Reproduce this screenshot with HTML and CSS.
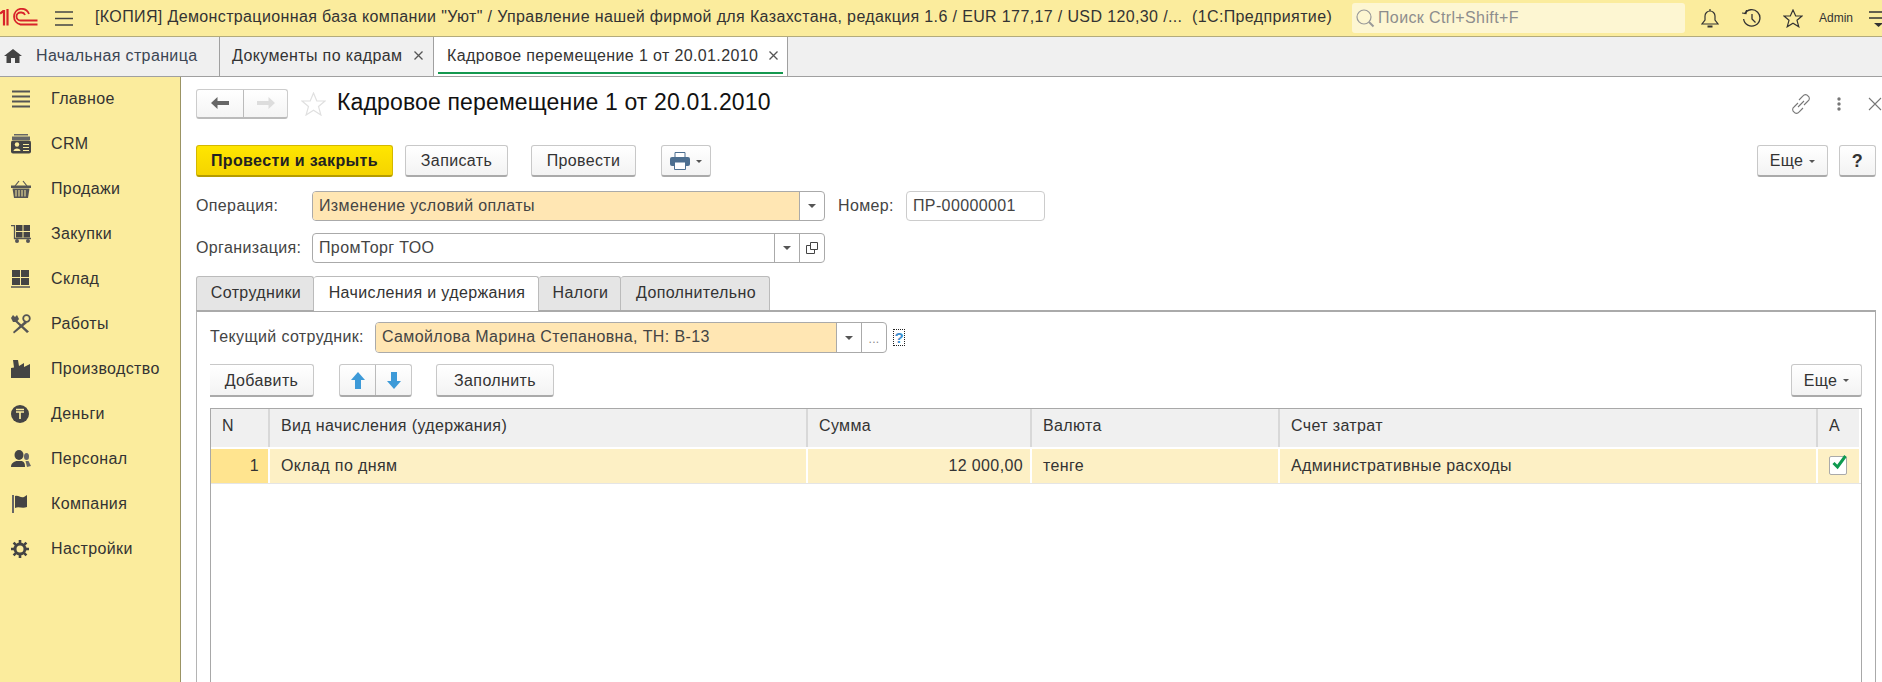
FILE: index.html
```html
<!DOCTYPE html>
<html lang="ru">
<head>
<meta charset="utf-8">
<title>Кадровое перемещение</title>
<link rel="stylesheet" href="styles.css">
</head>
<body>
<header class="topbar">
  <svg class="logo" width="38" height="18" viewBox="0 0 38 18" fill="none" stroke="#d8232a">
    <path d="M0 5.500L3.500 3M4 2v15.500M7.500 1v16.500" stroke-width="2.200"/>
    <path d="M37.500 16.500H20.500A8 8 0 0 1 20.500 .8h1A8 8 0 0 1 29 6" stroke-width="1.800"/>
    <path d="M37.500 12.500H20.500A4 4 0 0 1 20.500 4.500h1A4 4 0 0 1 25 7" stroke-width="1.800"/>
  </svg>
  <svg class="burger" width="18" height="15" viewBox="0 0 18 15"><path d="M0 1h18M0 7.500h18M0 14h18" stroke="#444" stroke-width="1.300"/></svg>
  <div class="apptitle">[КОПИЯ] Демонстрационная база компании "Уют" / Управление нашей фирмой для Казахстана, редакция 1.6 / EUR 177,17 / USD 120,30 /...&nbsp;&nbsp;(1С:Предприятие)</div>
  <div class="search">
    <svg width="19" height="19" viewBox="0 0 19 19" fill="none"><circle cx="8" cy="8" r="7" stroke="#999" stroke-width="1.200"/><path d="M13 13l4.500 4.500" stroke="#999" stroke-width="2"/></svg>
    <span>Поиск Ctrl+Shift+F</span>
  </div>
  <svg class="ticon bell" width="18" height="19" viewBox="0 0 18 19" fill="none" stroke="#333" stroke-width="1.200"><path d="M1 15h16l-3-4V7a5 5 0 0 0-10 0v4z"/><path d="M6.500 17.500h5" stroke-width="2"/><path d="M9 0v2"/></svg>
  <svg class="ticon hist" width="20" height="19" viewBox="0 0 20 19" fill="none" stroke="#333" stroke-width="1.300"><path d="M2.500 5a8.200 8.200 0 1 1-.9 5"/><path d="M0 4l4 .5L4.500 1" stroke-width="1.200"/><path d="M10 5v5l3.500 3.500"/></svg>
  <svg class="ticon fav" width="20" height="19" viewBox="0 0 20 19" fill="none" stroke="#333" stroke-width="1.200"><path d="M10 1l2.700 6h6.300l-5 4.300 1.800 6.500L10 14.300l-5.800 3.500L6 11.300 1 7h6.300z"/></svg>
  <span class="admin">Admin</span>
  <svg class="menu2" width="14" height="19" viewBox="0 0 14 19"><path d="M0 3h20M0 9h20" stroke="#333" stroke-width="1.300"/><path d="M5 14h9l-4.500 4z" fill="#333"/></svg>
</header>

<nav class="tabbar">
  <div class="ptab home">
    <svg width="18" height="14" viewBox="0 0 18 14"><path d="M9 0L0 7h2.500v7h4.500V9h4v5h4.500V7H18z" fill="#444"/></svg>
    <span>Начальная страница</span>
  </div>
  <div class="ptab docs"><span>Документы по кадрам</span><svg class="x" width="9" height="9" viewBox="0 0 9 9"><path d="M.5 .5l8 8M8.500 .5l-8 8" stroke="#555" stroke-width="1.300"/></svg></div>
  <div class="ptab current"><span>Кадровое перемещение 1 от 20.01.2010</span><svg class="x" width="9" height="9" viewBox="0 0 9 9"><path d="M.5 .5l8 8M8.500 .5l-8 8" stroke="#555" stroke-width="1.300"/></svg></div>
</nav>

<div class="main">
  <aside class="side">
    <div class="item"><svg width="20" height="18" viewBox="0 0 20 18"><path d="M1 1.500h18M1 6.500h18M1 11.500h18M1 16.500h18" stroke="#555" stroke-width="2.200"/></svg><span>Главное</span></div>
    <div class="item"><svg width="20" height="20" viewBox="0 0 20 20"><path d="M3 0h14v1.500H3zM1 2.500h18V6H1z" fill="#666"/><rect y="6.500" width="20" height="13" rx="2" fill="#444"/><circle cx="6" cy="10.500" r="2.200" fill="#fbec9d"/><path d="M2.500 17c0-3.500 7-3.500 7 0z" fill="#fbec9d"/><path d="M12 10.500h6M12 13.500h6M12 16.500h6" stroke="#fbec9d"/></svg><span>CRM</span></div>
    <div class="item"><svg width="20" height="18" viewBox="0 0 20 18"><path d="M0 5.500h20V8H0zM1.500 8.500h17L17 18H3z" fill="#555"/><path d="M4 6l4-5M16 6l-4-5" stroke="#555" stroke-width="1.200"/><path d="M5 10v6.500M8 10v6.500M11 10v6.500M14 10v6.500" stroke="#fbec9d"/></svg><span>Продажи</span></div>
    <div class="item"><svg width="20" height="18" viewBox="0 0 20 18"><path d="M0 .5h3.500V13.500H20" fill="none" stroke="#555" stroke-width="1.300"/><path d="M5 0h6.500v6H5zM12.500 0H19v6h-6.500zM5 7h6.500v5.500H5zM12.500 7H19v5.500h-6.500z" fill="#444"/><circle cx="6" cy="16" r="2" fill="#555"/><circle cx="17" cy="16" r="2" fill="#555"/></svg><span>Закупки</span></div>
    <div class="item"><svg width="19" height="18" viewBox="0 0 19 18"><path d="M1 0h8v7H1zM10 0h8v7h-8zM1 8h8v7H1zM10 8h8v7h-8z" fill="#444"/><path d="M0 17h19" stroke="#555" stroke-width="1.500"/></svg><span>Склад</span></div>
    <div class="item"><svg width="20" height="20" viewBox="0 0 20 20"><path d="M0 4l2-3 2 2 2-2 2 4-1.500 2L18 17.500 16 19 4.500 8 2 8z" fill="#555"/><path d="M14 7L2 18l1 1.500L16 9z" fill="#555"/><circle cx="15.500" cy="4.500" r="3.300" fill="none" stroke="#555" stroke-width="1.800"/></svg><span>Работы</span></div>
    <div class="item"><svg width="19" height="18" viewBox="0 0 19 18"><path d="M0 18V8l3-.5L2 0h5l1 6 5-3v4l6-3v14z" fill="#444"/></svg><span>Производство</span></div>
    <div class="item"><svg width="18" height="18" viewBox="0 0 18 18"><circle cx="9" cy="9" r="9" fill="#444"/><path d="M5 4.500h8M5 7h8M9 7v7" stroke="#fbec9d" stroke-width="1.700"/></svg><span>Деньги</span></div>
    <div class="item"><svg width="20" height="18" viewBox="0 0 20 18"><ellipse cx="8" cy="5" rx="4.500" ry="5" fill="#444"/><path d="M0 17c0-4 3-5 5-6h6c2 1 3 2 3 6z" fill="#444"/><ellipse cx="15.500" cy="6.500" rx="2.500" ry="3.500" fill="#666"/><path d="M14.500 11h3l2.500 5-4 1z" fill="#666"/></svg><span>Персонал</span></div>
    <div class="item"><svg width="17" height="18" viewBox="0 0 17 18"><path d="M2 0v18" stroke="#666" stroke-width="2"/><path d="M4 1c4-1 5 2 9 1l3-2v12c-5 2-8-1-12 1z" fill="#444"/></svg><span>Компания</span></div>
    <div class="item"><svg width="18" height="18" viewBox="0 0 18 18"><circle cx="9" cy="9" r="5" fill="none" stroke="#444" stroke-width="3"/><path d="M9 0v4M9 14v4M0 9h4M14 9h4M2.600 2.600l3 3M12.400 12.400l3 3M15.400 2.600l-3 3M5.600 12.400l-3 3" stroke="#444" stroke-width="2.600"/></svg><span>Настройки</span></div>
  </aside>

  <main class="content">
    <div class="titlerow">
      <div class="navgroup">
        <div class="navbtn back"><svg width="18" height="12" viewBox="0 0 18 12"><path d="M6.500 0v4H18v4H6.500v4L0 6z" fill="#666"/></svg></div>
        <div class="navbtn fwd"><svg width="18" height="12" viewBox="0 0 18 12"><path d="M11.500 0v4H0v4h11.500v4L18 6z" fill="#ddd"/></svg></div>
      </div>
      <svg class="star" width="25" height="24" viewBox="0 0 25 24" fill="none" stroke="#e0e0e0" stroke-width="1.200"><path d="M12.500 1l3.300 8h8.200l-6.500 5.500 2.400 8.500-7.400-4.800L5.100 23l2.400-8.500L1 9h8.200z"/></svg>
      <h1>Кадровое перемещение 1 от 20.01.2010</h1>
      <div class="winicons">
        <svg width="20" height="20" viewBox="0 0 20 20" fill="none" stroke="#777" stroke-width="1.100"><path d="M8 6l4-4a3 3 0 0 1 5 0 3 3 0 0 1 0 5l-4 4M12 14l-4 4a3 3 0 0 1-5 0 3 3 0 0 1 0-5l4-4M7 13l6-6"/></svg>
        <svg class="dots" width="4" height="14" viewBox="0 0 4 14"><circle cx="2" cy="2" r="1.700" fill="#777"/><circle cx="2" cy="7" r="1.700" fill="#777"/><circle cx="2" cy="12" r="1.700" fill="#777"/></svg>
        <svg class="close" width="14" height="14" viewBox="0 0 14 14"><path d="M1 1l12 12M13 1L1 13" stroke="#777" stroke-width="1.100"/></svg>
      </div>
    </div>

    <div class="cmdrow">
      <button class="btn primary">Провести и закрыть</button>
      <button class="btn b-save">Записать</button>
      <button class="btn b-post">Провести</button>
      <button class="btn b-print">
        <svg width="20" height="18" viewBox="0 0 20 18"><path d="M5 .5h10v5H5z" fill="#fff" stroke="#4d6f90"/><rect y="5" width="20" height="9" rx="2" fill="#4d6f90"/><path d="M4.500 10h11v7.500h-11z" fill="#fff" stroke="#4d6f90"/></svg>
        <i class="caret"></i>
      </button>
      <div class="spacer"></div>
      <button class="btn b-more">Еще<i class="caret"></i></button>
      <button class="btn b-help">?</button>
    </div>

    <div class="fieldrow r-op">
      <label class="lbl">Операция:</label>
      <div class="field f-main">
        <div class="val hi">Изменение условий оплаты</div>
        <div class="fbtn"><i class="caret dark"></i></div>
      </div>
      <label class="lbl l-num">Номер:</label>
      <div class="field f-num"><div class="val">ПР-00000001</div></div>
    </div>
    <div class="fieldrow r-org">
      <label class="lbl">Организация:</label>
      <div class="field f-main">
        <div class="val">ПромТорг ТОО</div>
        <div class="fbtn"><i class="caret dark"></i></div>
        <div class="fbtn"><svg width="12" height="12" viewBox="0 0 12 12" fill="none" stroke="#444"><path d="M4.500 .5h7v7h-7z"/><path d="M4 3.500H.5v8h8V8"/></svg></div>
      </div>
    </div>

    <div class="tabs">
      <div class="tab t1">Сотрудники</div>
      <div class="tab t2 on">Начисления и удержания</div>
      <div class="tab t3">Налоги</div>
      <div class="tab t4">Дополнительно</div>
    </div>

    <section class="panel">
      <div class="fieldrow r-emp">
        <label class="lbl">Текущий сотрудник:</label>
        <div class="field f-emp">
          <div class="val hi">Самойлова Марина Степановна, ТН: В-13</div>
          <div class="fbtn"><i class="caret dark"></i></div>
          <div class="fbtn dots3">...</div>
        </div>
        <span class="qmark">?</span>
      </div>
      <div class="toolrow">
        <button class="btn b-add">Добавить</button>
        <div class="arrows">
          <div class="arrow"><svg width="14" height="17" viewBox="0 0 14 17"><path d="M7 0l7 8H10v9H4V8H0z" fill="#3d9ad8"/></svg></div>
          <div class="arrow"><svg width="14" height="17" viewBox="0 0 14 17"><path d="M7 17l7-8H10V0H4v9H0z" fill="#3d9ad8"/></svg></div>
        </div>
        <button class="btn b-fill">Заполнить</button>
        <div class="spacer"></div>
        <button class="btn b-more2">Еще<i class="caret"></i></button>
      </div>
      <div class="table">
        <div class="trow head">
          <div class="cell">N</div>
          <div class="cell">Вид начисления (удержания)</div>
          <div class="cell">Сумма</div>
          <div class="cell">Валюта</div>
          <div class="cell">Счет затрат</div>
          <div class="cell">А</div>
        </div>
        <div class="trow data">
          <div class="cell num">1</div>
          <div class="cell">Оклад по дням</div>
          <div class="cell right">12 000,00</div>
          <div class="cell">тенге</div>
          <div class="cell">Административные расходы</div>
          <div class="cell chk"><span class="box"><svg width="20" height="18" viewBox="0 0 20 18"><path d="M3.500 9l4 4 8-11" fill="none" stroke="#0e9a4f" stroke-width="3"/></svg></span></div>
        </div>
      </div>
    </section>
  </main>
</div>
</body>
</html>
```

FILE: styles.css
```css
* { box-sizing: border-box; }
html, body { margin: 0; height: 682px; overflow: hidden; }
body { font-family: "Liberation Sans", Arial, sans-serif; font-size: 16px; letter-spacing: .37px; color: #333; background: #fff; }

.topbar { height: 37px; background: #fbec9d; border-bottom: 1px solid #b3ab7c; display: flex; align-items: center; position: relative; overflow: hidden; }
.logo { flex: none; margin: 0 17px 2px 0; }
.burger { flex: none; margin-right: 22px; }
.apptitle { width: 1257px; flex: none; white-space: nowrap; overflow: hidden; color: #333; padding-bottom: 2px; }
.search { flex: none; width: 333px; height: 30px; background: #fdf6d2; border-radius: 3px; display: flex; align-items: center; padding-left: 4px; gap: 3px; color: #8d8d8d; }
.ticon { flex: none; }
.bell { margin-left: 16px; }
.hist { margin-left: 23px; }
.fav { margin-left: 21px; }
.admin { flex: none; font-size: 12px; letter-spacing: 0; margin-left: 16px; color: #333; }
.menu2 { flex: none; margin-left: 16px; }

.tabbar { height: 40px; background: #f0f0f0; border-bottom: 1px solid #a0a0a0; display: flex; }
.ptab { display: flex; align-items: center; height: 39px; border-right: 1px solid #a0a0a0; color: #333; position: relative; padding-bottom: 2px; }
.home { width: 220px; padding-left: 4px; gap: 14px; color: #3c4654; }
.docs { width: 214px; padding-left: 12px; padding-right: 10px; }
.current { width: 354px; padding-left: 13px; padding-right: 9px; background: #fff; }
.current::after { content: ""; position: absolute; left: 4px; right: 4px; bottom: 2px; height: 2px; background: #15984f; }
.x { margin-left: auto; flex: none; }

.main { display: flex; height: 605px; }
.side { width: 181px; flex: none; background: #fbec9d; border-right: 1px solid #9b9464; }
.item { height: 45px; display: flex; align-items: center; padding: 0 0 1px 11px; color: #333; }
.item svg { flex: none; }
.item span { position: absolute; left: 51px; }

.content { flex: 1; padding: 11px 0 0 15px; min-width: 0; position: relative; overflow: hidden; }
.titlerow { display: flex; align-items: center; height: 31px; }
.navgroup { display: flex; width: 92px; height: 30px; flex: none; border: 1px solid #ccc; border-bottom: 2px solid #bbb; border-radius: 3px; background: linear-gradient(#fff, #f4f4f4); }
.navbtn { display: flex; align-items: center; justify-content: center; }
.back { width: 47px; border-right: 1px solid #bbb; }
.fwd { flex: 1; }
.star { flex: none; margin-left: 13px; }
h1 { margin: 0 0 2px 11px; font-size: 23px; letter-spacing: .15px; font-weight: 400; color: #111; white-space: nowrap; }
.winicons { margin-left: auto; display: flex; align-items: center; }
.winicons svg { flex: none; }
.dots { margin-left: 26px; }
.close { margin-left: 27px; }

.btn { font: inherit; letter-spacing: inherit; color: #333; height: 32px; background: linear-gradient(#fff, #f3f3f3); border: 1px solid #c8c8c8; border-bottom: 2px solid #aaa; border-radius: 3px; padding: 1px 0 0; display: flex; align-items: center; justify-content: center; flex: none; }
.cmdrow { display: flex; margin-top: 26px; height: 32px; }
.primary { width: 197px; font-weight: 700; color: #222; background: linear-gradient(#ffe600, #f5d400); border-color: #d4b800; border-bottom-color: #b59c00; }
.b-save { width: 103px; margin-left: 12px; }
.b-post { width: 105px; margin-left: 23px; }
.b-print { width: 50px; margin-left: 25px; gap: 6px; }
.spacer { flex: 1; }
.b-more { width: 71px; gap: 6px; }
.b-help { width: 37px; margin-left: 11px; margin-right: 6px; font-weight: 700; font-size: 18px; }
.caret { display: inline-block; border: 3px solid transparent; border-top: 3px solid #555; border-bottom: 0; }
.caret.dark { border-width: 4px 4px 0; border-top-color: #555; }

.fieldrow { display: flex; align-items: center; }
.r-op { margin-top: 14px; height: 30px; }
.r-org { margin-top: 12px; height: 30px; }
.lbl { flex: none; width: 116px; color: #444; padding-bottom: 1px; }
.field { display: flex; height: 30px; border: 1px solid #aaa; border-radius: 4px; background: #fff; overflow: hidden; flex: none; }
.val { flex: 1; display: flex; align-items: center; padding: 0 0 1px 6px; color: #444; white-space: nowrap; }
.val.hi { background: #ffe6b3; }
.fbtn { width: 25px; flex: none; border-left: 1px solid #aaa; display: flex; align-items: center; justify-content: center; }
.f-main { width: 513px; }
.l-num { width: 55px; margin-left: 13px; }
.f-num { width: 139px; margin-left: 13px; border-color: #ccc; }

.tabs { display: flex; margin-top: 13px; height: 35px; position: relative; z-index: 1; }
.tab { height: 34px; background: #e5e5e5; border: 1px solid #bbb; border-bottom: 0; border-left: 0; border-radius: 3px 3px 0 0; display: flex; align-items: center; justify-content: center; color: #333; padding: 0 0 2px 2px; }
.t1 { width: 118px; border-left: 1px solid #bbb; }
.t2 { width: 225px; }
.t3 { width: 82px; }
.t4 { width: 149px; }
.on { background: #fff; height: 35px; padding-bottom: 3px; }

.panel { margin-top: -1px; border: 1px solid #b4b4b4; border-top: 2px solid #aaa; border-right: 1px solid #aaa; height: 400px; margin-right: 6px; padding: 10px 13px 0 13px; }
.r-emp { height: 31px; }
.r-emp .lbl { width: 165px; }
.f-emp { width: 512px; height: 31px; }
.qmark { margin-left: 6px; width: 12px; height: 17px; border: 1px dotted #222; color: #3d8fd0; font-weight: 700; font-size: 15px; letter-spacing: 0; line-height: 15px; text-align: center; }
.dots3 { color: #888; font-size: 12px; padding-top: 3px; }

.toolrow { display: flex; margin-top: 11px; height: 33px; }
.toolrow .btn { height: 33px; }
.b-add { width: 104px; border-left: 0; border-radius: 0 3px 3px 0; }
.arrows { display: flex; margin-left: 25px; width: 73px; height: 33px; border: 1px solid #c8c8c8; border-bottom: 2px solid #aaa; border-radius: 3px; background: linear-gradient(#fff, #f3f3f3); }
.arrow { flex: 1; display: flex; align-items: center; justify-content: center; }
.arrow:first-child { border-right: 1px solid #bbb; }
.b-fill { width: 118px; margin-left: 24px; }
.b-more2 { width: 71px; gap: 6px; }

.table { margin-top: 11px; border: 1px solid #a8a8a8; border-bottom: 0; height: 300px; }
.trow { display: grid; grid-template-columns: 59px 538px 224px 248px 538px 43px; }
.cell { display: flex; align-items: center; padding-left: 11px; white-space: nowrap; border-right: 2px solid #fff; }
.head { height: 38px; }
.head .cell { background: #f0f0f0; color: #333; border-right: 2px solid #d8d8d8; padding-bottom: 4px; }
.head .cell:last-child { border-right-color: #fff; }
.data { height: 35px; margin-top: 2px; border-bottom: 1px solid #e5e5e5; }
.data .cell { background: #fdf0c5; height: 34px; padding-bottom: 1px; }
.num { background: #ffe48f !important; justify-content: flex-end; padding-right: 9px; }
.right { justify-content: flex-end; padding-right: 7px; }
.box { width: 18px; height: 19px; background: #fff; border: 1px solid #aaa; border-radius: 2px; position: relative; display: block; }
.box svg { position: absolute; left: 0; top: -3px; }
```
